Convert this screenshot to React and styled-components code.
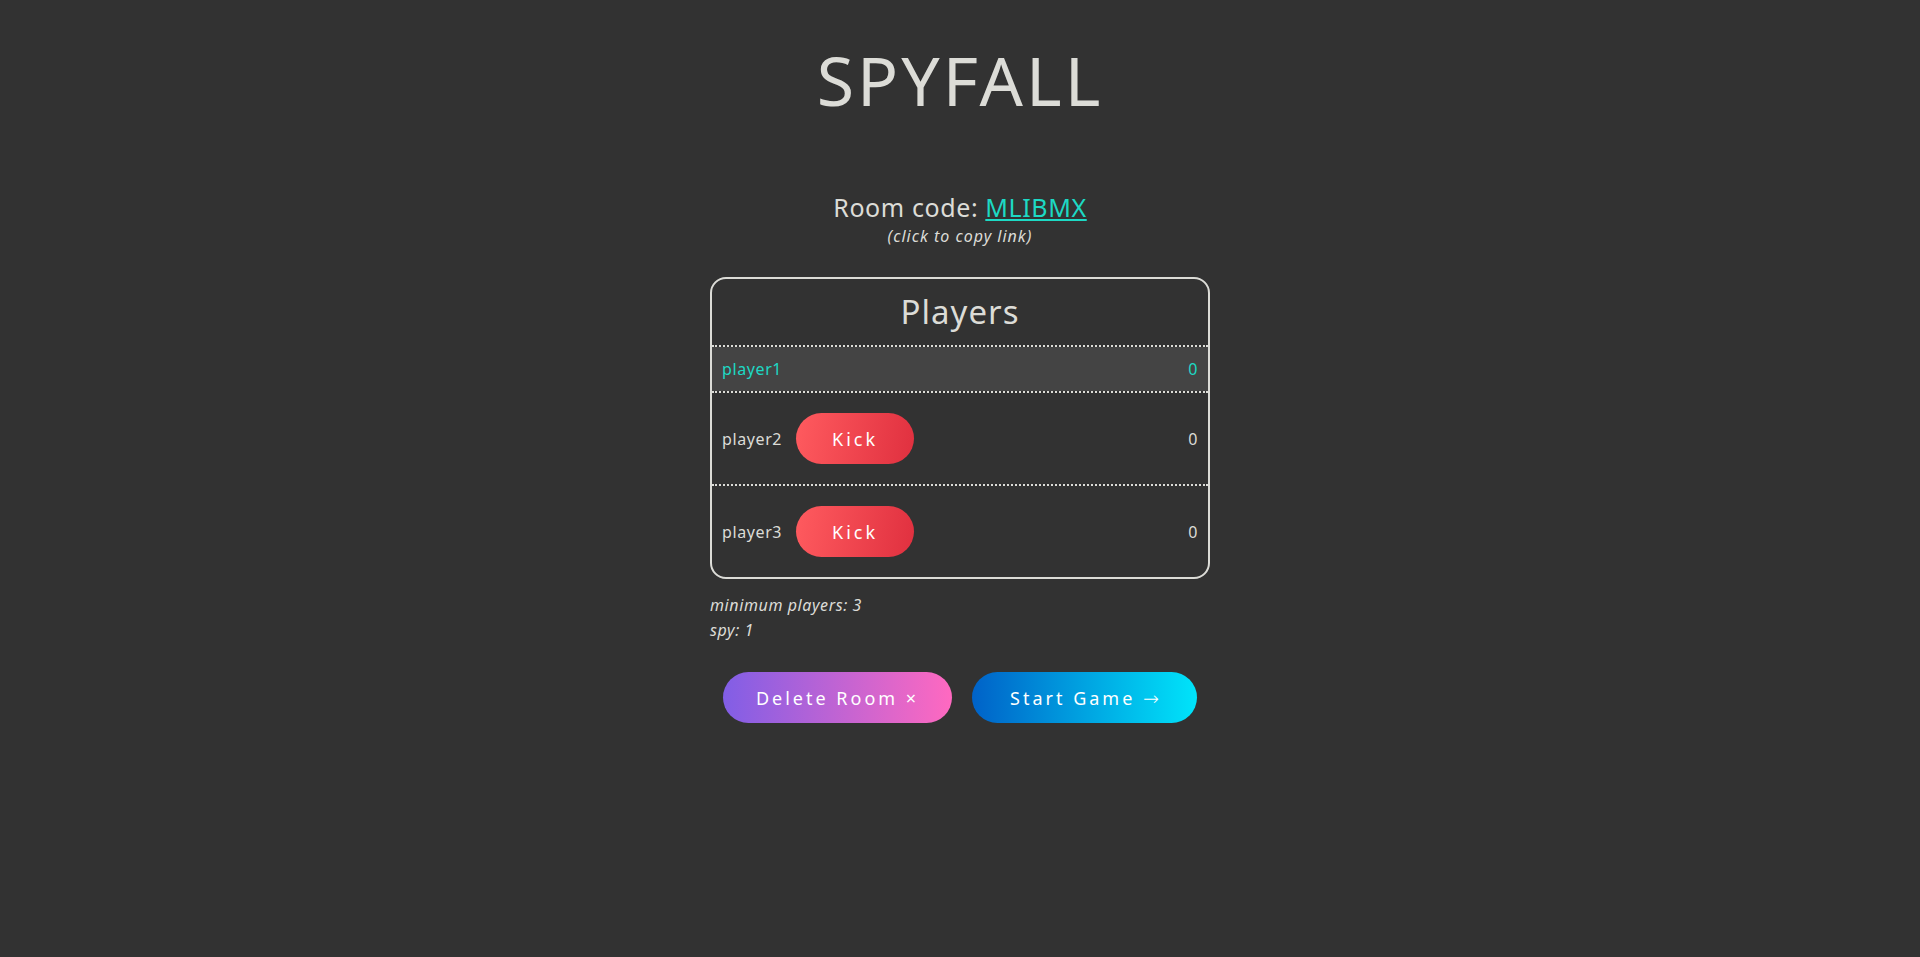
import React from 'react'
import styled, { createGlobalStyle } from 'styled-components'

const GlobalStyle = createGlobalStyle`
  html, body {
    margin: 0;
    padding: 0;
    background: #323232;
    color: #dcdcd7;
    font-family: "Noto Sans", "Open Sans", sans-serif;
  }
`

const Page = styled.div`
  display: flex;
  flex-direction: column;
  align-items: center;
  padding-top: 30px;
  min-height: 957px;
  box-sizing: border-box;
`

const Title = styled.h1`
  margin: 0;
  font-size: 68px;
  font-weight: 400;
  line-height: 100px;
  letter-spacing: 3px;
  color: #dcdcd7;
`

const RoomCode = styled.div`
  margin-top: 62px;
  font-size: 25px;
  line-height: 30px;
  letter-spacing: 0.6px;
`

const Code = styled.a`
  color: #1dd9c4;
  text-decoration: underline;
  cursor: pointer;
`

const Hint = styled.div`
  margin-top: 4px;
  font-size: 16px;
  font-style: italic;
  line-height: 20px;
  letter-spacing: 1px;
`

const Panel = styled.div`
  margin-top: 31px;
  width: 500px;
  box-sizing: border-box;
  border: 2px solid #dcdcd7;
  border-radius: 16px;
  overflow: hidden;
`

const PanelTitle = styled.h2`
  margin: 0;
  text-align: center;
  font-size: 33px;
  font-weight: 400;
  line-height: 66px;
  letter-spacing: 1px;
  border-bottom: 2px dotted #dcdcd7;
`

const Row = styled.div`
  display: flex;
  align-items: center;
  padding: 0 10px;
  height: ${({ $tall }) => ($tall ? '91px' : '44px')};
  background: ${({ $me }) => ($me ? '#444444' : 'transparent')};
  color: ${({ $me }) => ($me ? '#1dd9c4' : '#dcdcd7')};
  font-size: 16px;
  letter-spacing: 0.6px;
  & + & {
    border-top: 2px dotted #dcdcd7;
  }
`

const Name = styled.span`
  flex: none;
`

const Score = styled.span`
  margin-left: auto;
`

const Pill = styled.button`
  border: 0;
  border-radius: 26px;
  height: 51px;
  padding: 0;
  color: #fff;
  font-family: inherit;
  font-size: 18px;
  letter-spacing: 3px;
  cursor: pointer;
  background: ${({ $grad }) => $grad};
`

const KickButton = styled(Pill)`
  margin-left: 14px;
  width: 118px;
`

const ActionButton = styled(Pill)`
  width: ${({ $w }) => $w}px;
`

const Arrow = styled.span`
  font-family: "DejaVu Sans", sans-serif;
  font-size: 19px;
  font-weight: 300;
  letter-spacing: 0;
`

const Notes = styled.div`
  width: 500px;
  margin-top: 14px;
  font-size: 16px;
  font-style: italic;
  line-height: 25px;
  letter-spacing: 0.6px;
`

const Actions = styled.div`
  display: flex;
  gap: 20px;
  margin-top: 29px;
`

const players = [
  { name: 'player1', score: 0, me: true },
  { name: 'player2', score: 0 },
  { name: 'player3', score: 0 },
]

export default function App() {
  return (
    <>
      <GlobalStyle />
      <Page>
        <Title>SPYFALL</Title>
        <RoomCode>
          Room code: <Code>MLIBMX</Code>
        </RoomCode>
        <Hint>(click to copy link)</Hint>
        <Panel>
          <PanelTitle>Players</PanelTitle>
          {players.map(p => (
            <Row key={p.name} $me={p.me} $tall={!p.me}>
              <Name>{p.name}</Name>
              {!p.me && (
                <KickButton $grad="linear-gradient(100deg, #ff5b5f, #e0303f)">Kick</KickButton>
              )}
              <Score>{p.score}</Score>
            </Row>
          ))}
        </Panel>
        <Notes>
          minimum players: 3
          <br />
          spy: 1
        </Notes>
        <Actions>
          <ActionButton $w={229} $grad="linear-gradient(90deg, #815ee6, #ff69c0)">Delete Room ×</ActionButton>
          <ActionButton $w={225} $grad="linear-gradient(90deg, #0062c8, #00e4fa)">
            Start Game <Arrow>→</Arrow>
          </ActionButton>
        </Actions>
      </Page>
    </>
  )
}
